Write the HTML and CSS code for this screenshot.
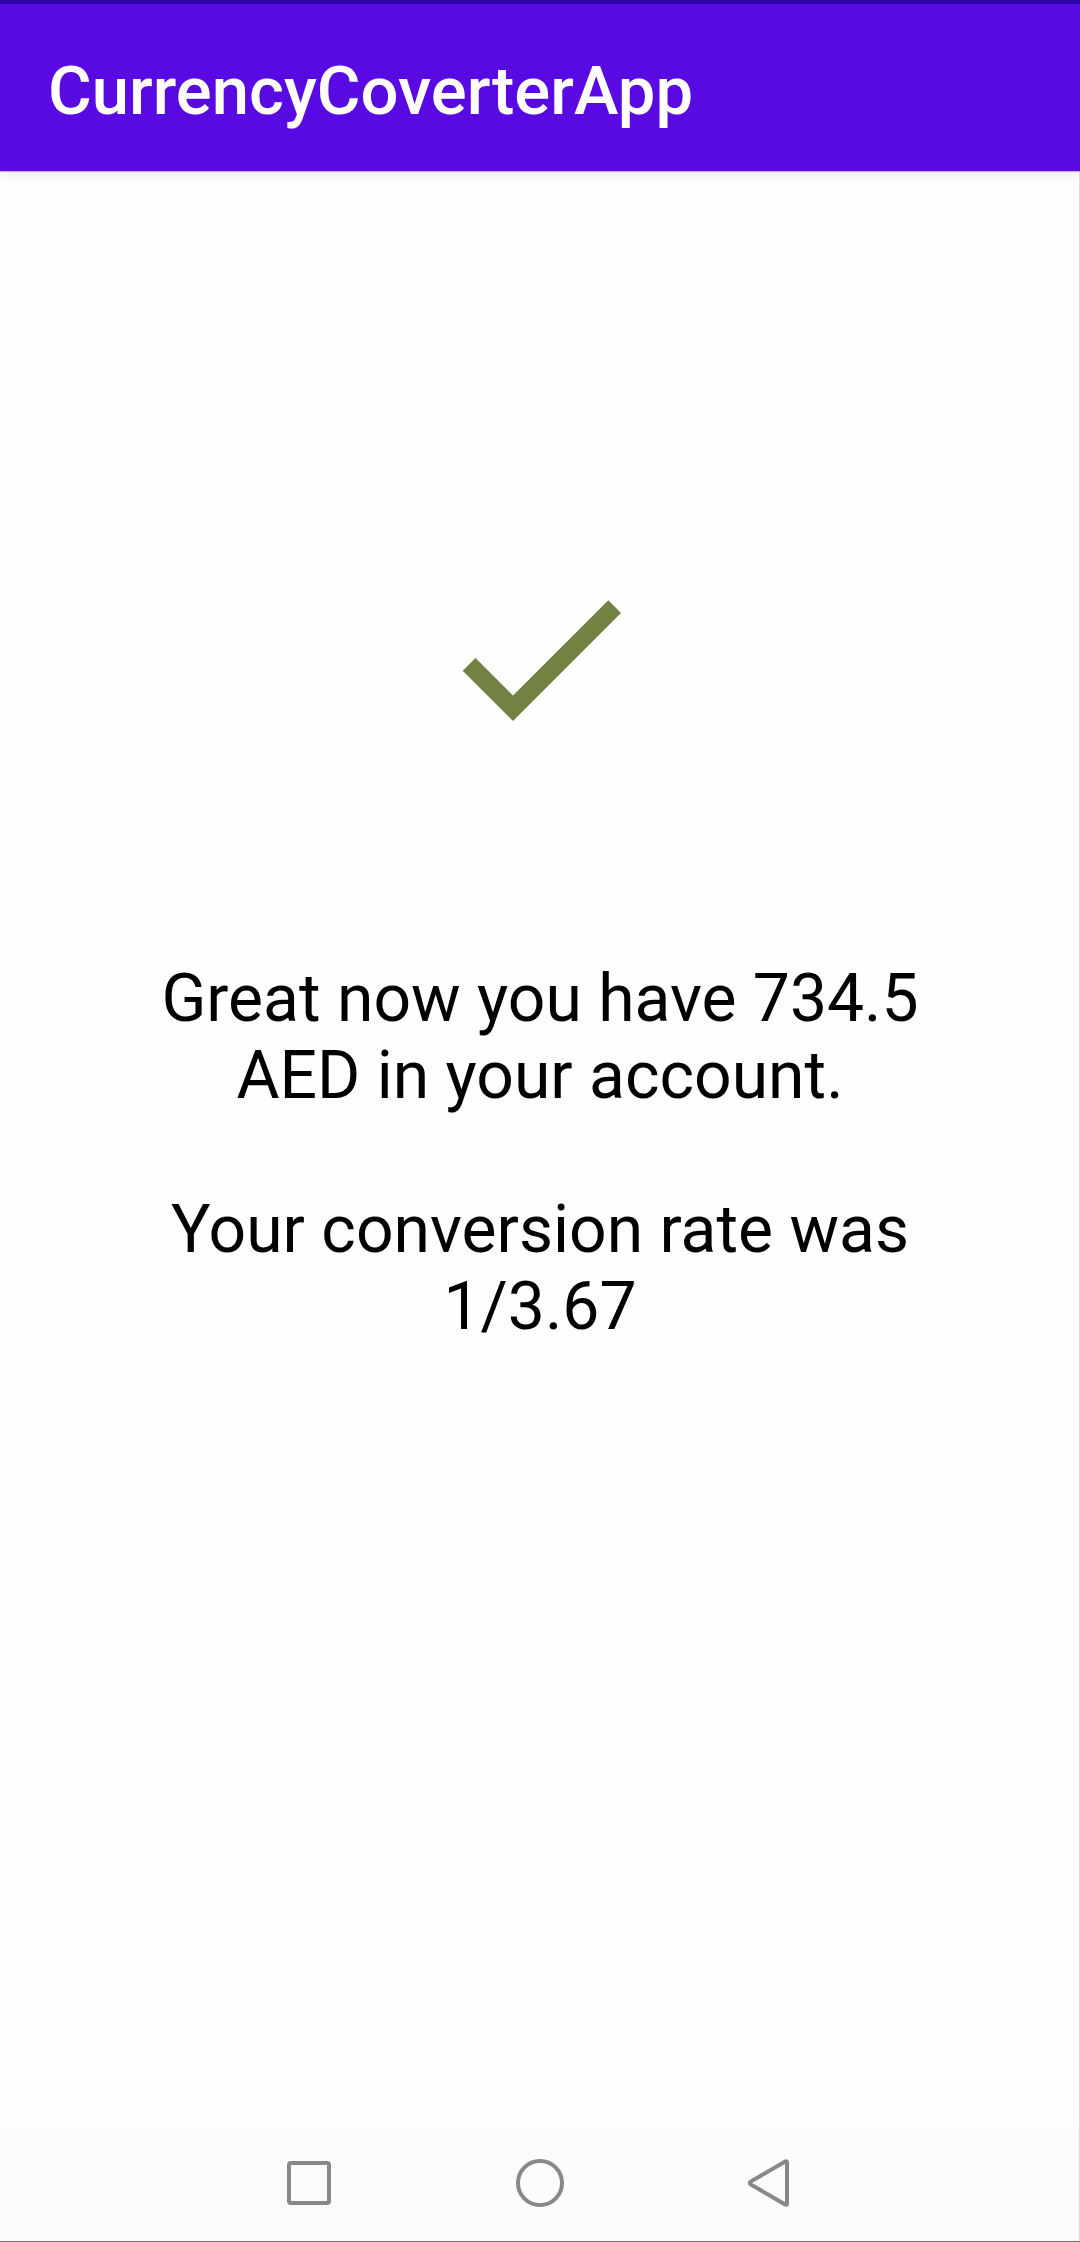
FILE: index.html
```html
<!DOCTYPE html>
<html lang="en">
<head>
  <meta charset="utf-8">
  <meta name="viewport" content="width=device-width, initial-scale=1">
  <title>CurrencyCoverterApp</title>
  <link rel="stylesheet" href="styles.css">
</head>
<body>
  <div class="screen">
    <header class="app-bar">
      <h1 class="app-title">CurrencyCoverterApp</h1>
    </header>
    <main class="result">
      <svg class="check" viewBox="0 0 24 24" aria-hidden="true">
        <path d="M9 16.17L4.83 12l-1.42 1.41L9 19 21 7l-1.41-1.41z"/>
      </svg>
      <div class="message">
        <p>Great now you have 734.5 AED in your account.</p>
        <p>Your conversion rate was 1/3.67</p>
      </div>
    </main>
    <nav class="nav-bar" aria-label="System">
      <button class="nav-button" type="button" aria-label="Recent apps">
        <svg viewBox="0 0 48 48"><rect x="4" y="4" width="40" height="40" rx="2"/></svg>
      </button>
      <button class="nav-button" type="button" aria-label="Home">
        <svg viewBox="0 0 48 48"><circle cx="24" cy="24" r="22"/></svg>
      </button>
      <button class="nav-button" type="button" aria-label="Back">
        <svg viewBox="0 0 48 48"><path d="M38.3 2.4L3.7 22.6q-2 1.4 0 2.8L38.3 45.6q1.7.7 1.7-1.2V3.6q0-1.9-1.7-1.2z"/></svg>
      </button>
    </nav>
  </div>
</body>
</html>
```
FILE: styles.css
```css
* {
  box-sizing: border-box;
}

body {
  margin: 0;
  background: #fefefe;
  color: #000;
  font-family: Roboto, "Liberation Sans", sans-serif;
}

.screen {
  display: flex;
  flex-direction: column;
  min-height: 100vh;
  border-bottom: 1px solid #6c6c6c;
  box-shadow: inset -1px 0 #dcdcdc;
}

.app-bar {
  display: flex;
  align-items: center;
  height: 172px;
  padding: 8px 48px 0;
  border-top: 4px solid #3000a8;
  border-bottom: 1px solid #c9a8f5;
  background: #590ae2;
  box-shadow: 0 4px 12px rgba(0, 0, 0, 0.08);
}

.app-title {
  margin: 0;
  color: #fff;
  font-size: 67px;
  font-weight: 500;
  line-height: 77px;
}

.result {
  display: flex;
  flex: 1;
  flex-direction: column;
  align-items: center;
  gap: 194px;
  padding: 378px 14% 96px;
}

.check {
  width: 216px;
  height: 216px;
  fill: #728243;
}

.message {
  display: flex;
  flex-direction: column;
  gap: 77px;
  font-size: 66px;
  line-height: 77px;
  text-align: center;
}

.message p {
  margin: 0;
}

.nav-bar {
  display: flex;
  justify-content: center;
  height: 116px;
  margin-right: 1px;
  background: #fcfcfc;
}

.nav-button {
  display: flex;
  align-items: center;
  justify-content: center;
  width: 231px;
  padding: 0;
  border: 0;
  background: none;
}

.nav-button svg {
  width: 48px;
  height: 48px;
  fill: none;
  stroke: #888;
  stroke-width: 4;
}
```
